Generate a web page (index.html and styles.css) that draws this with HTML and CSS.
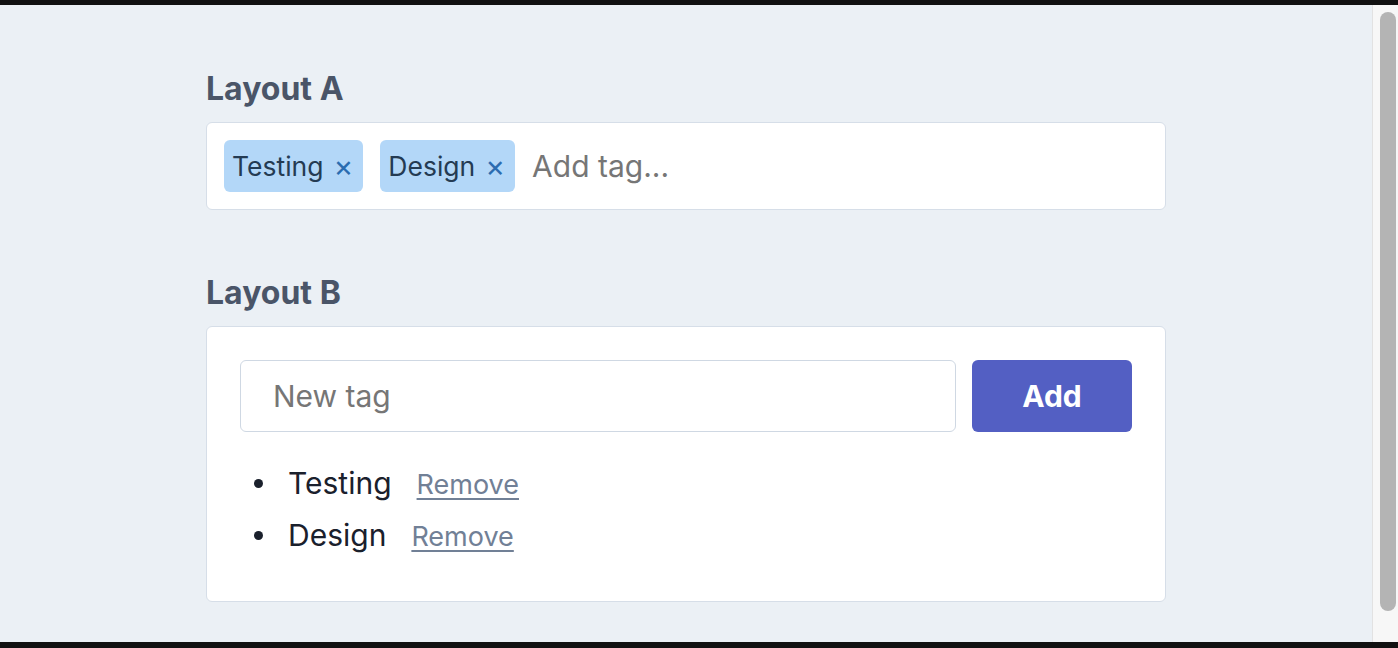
FILE: index.html
```html
<!DOCTYPE html>
<html lang="en">
<head>
<meta charset="utf-8">
<title>Tag inputs</title>
<link rel="stylesheet" href="styles.css">
</head>
<body>
<div class="frame-top"></div>
<div class="viewport">
  <main class="page">
    <div class="column">
      <section class="section">
        <h2 class="heading">Layout A</h2>
        <div class="card tag-field">
          <span class="tag">Testing<span class="tag-x">×</span></span>
          <span class="tag">Design<span class="tag-x">×</span></span>
          <input class="tag-input" type="text" placeholder="Add tag...">
        </div>
      </section>
      <section class="section section-b">
        <h2 class="heading">Layout B</h2>
        <div class="card card-b">
          <div class="add-row">
            <input class="new-input" type="text" placeholder="New tag">
            <button class="add-btn" type="button">Add</button>
          </div>
          <ul class="tag-list">
            <li class="tag-item">Testing<a class="remove" href="#">Remove</a></li>
            <li class="tag-item">Design<a class="remove" href="#">Remove</a></li>
          </ul>
        </div>
      </section>
    </div>
  </main>
  <div class="scrollbar"><div class="thumb"></div></div>
</div>
<div class="frame-bottom"></div>
</body>
</html>
```
FILE: styles.css
```css
* { box-sizing: border-box; }
html, body { margin: 0; padding: 0; }
body {
  height: 648px;
  display: flex;
  flex-direction: column;
  background: #111;
  font-family: Inter, "Noto Sans", "Liberation Sans", sans-serif;
  overflow: hidden;
}
.frame-top { height: 5px; background: #111; flex: none; }
.frame-bottom { height: 6px; background: #111; flex: none; }
.viewport { flex: 1; display: flex; min-height: 0; }
.page {
  flex: 1;
  background: #ebf0f5;
  padding-top: 64px;
}
.column { width: 960px; margin: 0 auto; }
.heading {
  margin: 0 0 13px;
  font-size: 32px;
  line-height: 40px;
  font-weight: 700;
  color: #4a5568;
}
.section-b { margin-top: 63px; }
.card {
  background: #fff;
  border: 1px solid #d6dee8;
  border-radius: 6px;
}
.tag-field {
  display: flex;
  align-items: center;
  gap: 17px;
  padding: 17px;
}
.tag {
  display: inline-flex;
  align-items: center;
  height: 52px;
  padding: 0 10px 0 8px;
  background: #b3d7f8;
  border-radius: 6px;
  font-size: 26.5px;
  line-height: 36px;
  color: #243b53;
}
.tag-x {
  margin-left: 10px;
  color: #2b6cb0;
  font-size: 30px;
  font-weight: 400;
  line-height: 36px;
}
.tag-input {
  flex: 1;
  min-width: 0;
  border: none;
  outline: none;
  padding: 0;
  font: inherit;
  font-size: 30px;
  color: #222;
  background: transparent;
}
.tag-input::placeholder, .new-input::placeholder { color: #767676; }
.card-b { padding: 33px; }
.add-row { display: flex; gap: 16px; }
.new-input {
  flex: 1;
  height: 72px;
  border: 1px solid #cfd8e3;
  border-radius: 6px;
  padding: 0 32px;
  font-family: inherit;
  font-size: 30px;
  outline: none;
}
.add-btn {
  width: 160px;
  height: 72px;
  border: none;
  border-radius: 6px;
  background: #535fc3;
  color: #fff;
  font-family: inherit;
  font-size: 30px;
  font-weight: 700;
}
.tag-list {
  margin: 25px 0 0;
  padding: 0 0 7px 48px;
  list-style: none;
  color: #1a202c;
  font-size: 30px;
  line-height: 52px;
}
.tag-item { height: 52px; }
.tag-item::before {
  content: "";
  display: inline-block;
  width: 9px;
  height: 9px;
  border-radius: 50%;
  background: #1a202c;
  margin: 0 25px 0 -34px;
  vertical-align: 6px;
}
.remove {
  margin-left: 25px;
  font-size: 27px;
  line-height: 30px;
  color: #718096;
  text-decoration: underline;
  text-underline-offset: 4px;
}
.scrollbar {
  width: 26px;
  flex: none;
  background: #f7f7f7;
  border-left: 1px solid #e2e2e2;
  padding: 7px 2px 0 7px;
}
.thumb {
  width: 16px;
  height: 599px;
  background: #b4b4b4;
  border-radius: 8px;
}
```
